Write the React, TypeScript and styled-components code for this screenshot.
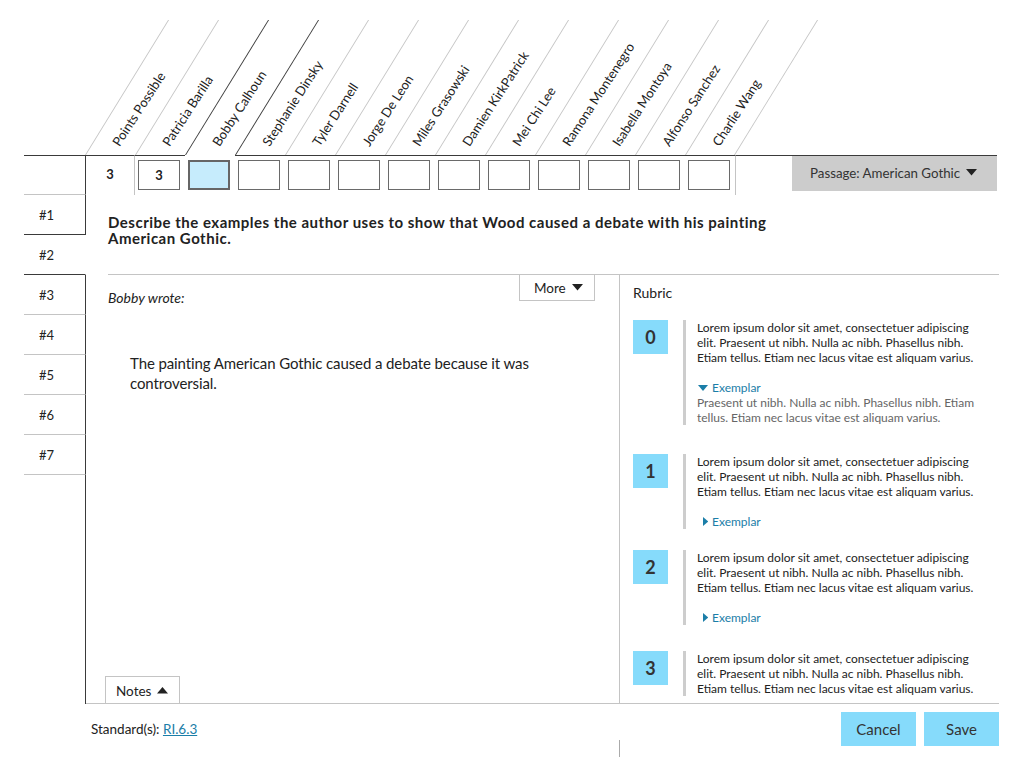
import React from 'react';
import styled, { createGlobalStyle, css } from 'styled-components';

const DARK = '#3a3a3a';
const GREY = '#c4c4c4';
const BLUE = '#86dbfb';
const LINK = '#1b7ea8';

const GlobalStyle = createGlobalStyle`
  html, body { margin: 0; padding: 0; background: #fff; }
  body { font-family: Lato, "Open Sans", sans-serif; color: #333; }
  * { box-sizing: border-box; }
`;

const students = [
  'Patricia Barilla', 'Bobby Calhoun', 'Stephanie Dinsky', 'Tyler Darnell',
  'Jorge De Leon', 'Miles Grasowski', 'Damien KirkPatrick', 'Mei Chi Lee',
  'Ramona Montenegro', 'Isabella Montoya', 'Alfonso Sanchez', 'Charlie Wang',
];
const scores = ['3', '', '', '', '', '', '', '', '', '', '', ''];
const SELECTED = 1;
const questions = ['#1', '#2', '#3', '#4', '#5', '#6', '#7'];
const ACTIVE_Q = 1;
const lorem =
  'Lorem ipsum dolor sit amet, consectetuer adipiscing elit. Praesent ut nibh. Nulla ac nibh. Phasellus nibh. Etiam tellus. Etiam nec lacus vitae est aliquam varius.';
const rubric = [
  { score: '0', open: true, after: 29, exemplar: 'Praesent ut nibh. Nulla ac nibh. Phasellus nibh. Etiam tellus. Etiam nec lacus vitae est aliquam varius.' },
  { score: '1', open: false, after: 21 },
  { score: '2', open: false, after: 26 },
  { score: '3', open: false, after: 26, noExemplar: true },
];

const Page = styled.div`
  width: 1024px;
  height: 768px;
  overflow: hidden;
`;

/* ---------- diagonal header ---------- */
const HeaderBar = styled.div`
  display: flex;
  height: 155px;
  padding: 20px 0 0 85px;
`;

const ColumnHead = styled.div<{ $dark: boolean; $last?: boolean }>`
  position: relative;
  width: 50px;
  height: 135px;
  &::before {
    content: '';
    position: absolute;
    inset: 0;
    border-left: 1px solid ${(p) => (p.$dark ? DARK : GREY)};
    ${(p) => p.$last && css`border-right: 1px solid ${GREY};`}
    transform-origin: 0 100%;
    transform: skewX(-31.6deg);
  }
`;

const HeadLabel = styled.span`
  position: absolute;
  left: 37px;
  bottom: 6px;
  transform-origin: 0 100%;
  transform: rotate(-57deg);
  white-space: nowrap;
  font-size: 13px;
  line-height: 15px;
  color: #222;
`;

/* ---------- score row ---------- */
const ScoreRow = styled.div`
  display: flex;
  height: 40px;
  margin-left: 24px;
  width: 973px;
`;

const Corner = styled.div`
  width: 62px;
  border-top: 1px solid ${DARK};
  border-right: 1px solid ${DARK};
  border-bottom: 1px solid ${GREY};
`;

const PointsCell = styled.div`
  width: 49px;
  border-top: 1px solid ${DARK};
  border-right: 1px solid ${GREY};
  display: flex;
  align-items: center;
  justify-content: center;
  font-size: 13px;
  font-weight: 700;
  color: #222;
  padding-bottom: 3px;
`;

const StudentCell = styled.div<{ $selected: boolean }>`
  width: 50px;
  padding: 4px 0 0 3px;
  border-top: 1px solid ${(p) => (p.$selected ? 'transparent' : DARK)};
`;

const ScoreBox = styled.div<{ $selected: boolean }>`
  width: 42px;
  height: 30px;
  border: ${(p) => (p.$selected ? `2px solid #666` : `1px solid #6a6a6a`)};
  background: ${(p) => (p.$selected ? '#c6ecfc' : '#fff')};
  display: flex;
  align-items: center;
  justify-content: center;
  font-size: 13px;
  font-weight: 700;
  color: #222;
`;

const RowFill = styled.div`
  flex: 1;
  border-top: 1px solid ${DARK};
  border-left: 1px solid ${GREY};
`;

const PassageButton = styled.div`
  width: 205px;
  height: 36px;
  border-top: 1px solid ${DARK};
  background: #cccccc;
  display: flex;
  align-items: center;
  gap: 6px;
  padding: 0 0 2px 18px;
  font-size: 13.3px;
  color: #333;
`;

/* ---------- body ---------- */
const Body = styled.div`
  display: flex;
  margin-left: 24px;
  width: 975px;
  height: 509px;
`;

const Nav = styled.div`
  width: 62px;
  display: flex;
  flex-direction: column;
`;

const NavItem = styled.div<{ $active: boolean; $beforeActive: boolean }>`
  height: 40px;
  flex: none;
  display: flex;
  align-items: center;
  padding: 0 0 0 15px;
  font-size: 13px;
  color: #222;
  border-right: 1px solid ${(p) => (p.$active ? 'transparent' : DARK)};
  border-bottom: 1px solid ${(p) => (p.$active || p.$beforeActive ? DARK : GREY)};
`;

const NavFill = styled.div`
  flex: 1;
  border-right: 1px solid ${DARK};
`;

const Content = styled.div`
  flex: 1;
  display: flex;
  flex-direction: column;
  padding-left: 22px;
  border-bottom: 1px solid ${GREY};
`;

const Question = styled.div`
  height: 79px;
  padding-top: 19px;
  width: 700px;
  font-size: 15px;
  letter-spacing: 0.5px;
  line-height: 16px;
  font-weight: 700;
  color: #222;
`;

const Panels = styled.div`
  flex: 1;
  display: flex;
  min-height: 0;
`;

const AnswerPanel = styled.div`
  width: 512px;
  display: flex;
  flex-direction: column;
  border-top: 1px solid ${GREY};
  border-right: 1px solid ${GREY};
`;

const AnswerTop = styled.div`
  display: flex;
  justify-content: space-between;
  align-items: flex-start;
`;

const Wrote = styled.div`
  margin-top: 15px;
  font-size: 14px;
  line-height: 16px;
  font-style: italic;
  color: #222;
`;

const TabButton = styled.div<{ $up?: boolean }>`
  display: flex;
  align-items: center;
  gap: 6px;
  height: ${(p) => (p.$up ? 27 : 26)}px;
  font-size: 13.5px;
  color: #222;
  border: 1px solid ${GREY};
  ${(p) =>
    p.$up
      ? css`
          border-bottom: none;
          margin-left: -3px;
          align-self: flex-start;
          padding: 1px 11px 0 10px;
        `
      : css`
          border-top: none;
          margin-right: 24px;
          width: 76px;
          padding: 0 11px 0 14px;
        `}
`;

const AnswerText = styled.div`
  margin: 47px 0 0 22px;
  width: 440px;
  font-size: 15px;
  letter-spacing: -0.1px;
  line-height: 20px;
  color: #222;
`;

const Grow = styled.div`
  flex: 1;
`;

const RubricPanel = styled.div`
  flex: 1;
  border-top: 1px solid ${GREY};
  padding: 9px 0 0 13px;
  overflow: hidden;
`;

const RubricTitle = styled.div`
  font-size: 14px;
  line-height: 18px;
  color: #222;
  margin-bottom: 18px;
`;

const RubricEntry = styled.div<{ $after: number }>`
  display: flex;
  align-items: flex-start;
  margin-bottom: ${(p) => p.$after}px;
`;

const ScoreChip = styled.div`
  width: 35px;
  height: 34px;
  flex: none;
  margin-right: 15px;
  background: ${BLUE};
  display: flex;
  align-items: center;
  justify-content: center;
  font-size: 18px;
  font-weight: 700;
  color: #333;
`;

const RubricBody = styled.div`
  width: 303px;
  border-left: 3px solid #cdcdcd;
  padding-left: 11px;
  font-size: 12px;
  line-height: 15px;
  color: #222;
`;

const ExemplarLink = styled.div`
  margin-top: 15px;
  display: flex;
  align-items: center;
  gap: 4px;
  color: ${LINK};
`;

const CaretSlot = styled.span`
  width: 11px;
  display: flex;
  justify-content: flex-end;
`;

const ExemplarText = styled.div`
  color: #666;
`;

/* ---------- footer ---------- */
const Footer = styled.div`
  display: flex;
  padding: 8px 0 0 91px;
  width: 999px;
`;

const FooterLeft = styled.div`
  width: 529px;
  display: flex;
  flex-direction: column;
`;

const Standards = styled.div`
  margin-top: 8px;
  font-size: 13.5px;
  line-height: 18px;
  color: #222;
  a {
    color: ${LINK};
    text-decoration: underline;
  }
`;

const Stub = styled.div`
  align-self: flex-end;
  width: 1px;
  height: 17px;
  margin-top: 2px;
  background: #aaa;
`;

const FooterRight = styled.div`
  flex: 1;
  display: flex;
  justify-content: flex-end;
  gap: 8px;
`;

const ActionButton = styled.button`
  width: 75px;
  height: 34px;
  border: none;
  background: ${BLUE};
  font-family: inherit;
  font-size: 15px;
  color: #333;
  padding: 0;
`;

const Caret = ({ dir, color = '#222', size = 11 }: { dir: 'down' | 'up' | 'right'; color?: string; size?: number }) => {
  if (dir === 'right')
    return (
      <svg width={size * 0.6} height={size} viewBox="0 0 6 10">
        <path d="M0 0 L6 5 L0 10 Z" fill={color} />
      </svg>
    );
  return (
    <svg width={size} height={size * 0.6} viewBox="0 0 10 6">
      <path d={dir === 'down' ? 'M0 0 L10 0 L5 6 Z' : 'M0 6 L10 6 L5 0 Z'} fill={color} />
    </svg>
  );
};

export default function App() {
  const heads = ['Points Possible', ...students];
  return (
    <Page>
      <GlobalStyle />
      <HeaderBar>
        {heads.map((h, i) => (
          <ColumnHead key={h} $dark={i === SELECTED + 1 || i === SELECTED + 2} $last={i === heads.length - 1}>
            <HeadLabel>{h}</HeadLabel>
          </ColumnHead>
        ))}
      </HeaderBar>

      <ScoreRow>
        <Corner />
        <PointsCell>3</PointsCell>
        {students.map((s, i) => (
          <StudentCell key={s} $selected={i === SELECTED}>
            <ScoreBox $selected={i === SELECTED}>{scores[i]}</ScoreBox>
          </StudentCell>
        ))}
        <RowFill />
        <PassageButton>
          Passage: American Gothic <Caret dir="down" color="#222" size={11} />
        </PassageButton>
      </ScoreRow>

      <Body>
        <Nav>
          {questions.map((q, i) => (
            <NavItem key={q} $active={i === ACTIVE_Q} $beforeActive={i === ACTIVE_Q - 1}>
              {q}
            </NavItem>
          ))}
          <NavFill />
        </Nav>
        <Content>
          <Question>
            Describe the examples the author uses to show that Wood caused a debate with his painting American Gothic.
          </Question>
          <Panels>
            <AnswerPanel>
              <AnswerTop>
                <Wrote>Bobby wrote:</Wrote>
                <TabButton>
                  More <Caret dir="down" />
                </TabButton>
              </AnswerTop>
              <AnswerText>The painting American Gothic caused a debate because it was controversial.</AnswerText>
              <Grow />
              <TabButton $up>
                Notes <Caret dir="up" />
              </TabButton>
            </AnswerPanel>
            <RubricPanel>
              <RubricTitle>Rubric</RubricTitle>
              {rubric.map((r) => (
                <RubricEntry key={r.score} $after={r.after}>
                  <ScoreChip>{r.score}</ScoreChip>
                  <RubricBody>
                    {lorem}
                    {!r.noExemplar && (
                      <ExemplarLink>
                        <CaretSlot>
                          <Caret dir={r.open ? 'down' : 'right'} color={LINK} size={r.open ? 10 : 9} />
                        </CaretSlot>
                        Exemplar
                      </ExemplarLink>
                    )}
                    {r.open && <ExemplarText>{r.exemplar}</ExemplarText>}
                  </RubricBody>
                </RubricEntry>
              ))}
            </RubricPanel>
          </Panels>
        </Content>
      </Body>

      <Footer>
        <FooterLeft>
          <Standards>
            Standard(s): <a href="#">RI.6.3</a>
          </Standards>
          <Stub />
        </FooterLeft>
        <FooterRight>
          <ActionButton>Cancel</ActionButton>
          <ActionButton>Save</ActionButton>
        </FooterRight>
      </Footer>
    </Page>
  );
}
